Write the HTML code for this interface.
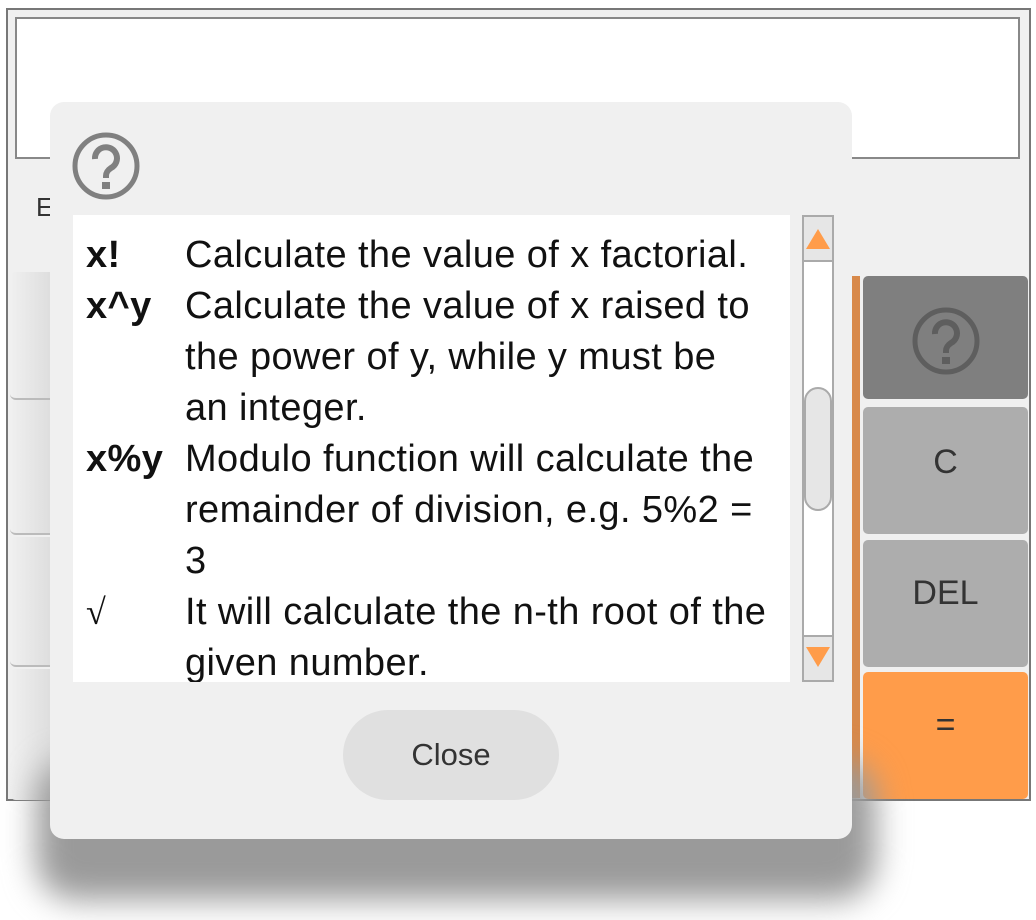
<!DOCTYPE html>
<html><head><meta charset="utf-8"><style>
*{margin:0;padding:0;box-sizing:border-box}
body{width:1036px;height:920px;background:#fff;position:relative;overflow:hidden;font-family:"Liberation Sans",Arial,sans-serif}
.abs{position:absolute}
.calc{left:6px;top:8px;width:1025px;height:793px;border:2px solid #777;background:#f0f0f0}
.disp{left:15px;top:17px;width:1005px;height:142px;border:2px solid #888;background:#fff}
.lb{left:10px;width:42px;background:linear-gradient(90deg,#f0f0f0,#ddd);border-radius:6px 0 0 6px;border-bottom:2px solid #bbb}
.rb{left:863px;width:165px;border-radius:5px;display:flex;align-items:center;justify-content:center;font-size:34px;color:#333}
.shadow{left:36px;top:760px;width:840px;height:140px;border-radius:40px;background:#9a9a9a;filter:blur(16px)}
.modal{left:50px;top:102px;width:802px;height:737px;background:#f0f0f0;border-radius:14px}
.content{left:73px;top:215px;width:717px;height:467px;background:#fff;overflow:hidden;font-size:38px;letter-spacing:0.4px;line-height:51px;color:#111}
.row{display:flex}
.k{width:112px;padding-left:13px;font-weight:bold;flex:none}
.v{white-space:nowrap}
.sb{left:802px;top:215px;width:32px;height:467px;border:2px solid #aaa;background:#fff}
.close{left:343px;top:710px;width:216px;height:90px;border-radius:45px;background:#e0e0e0;font-size:31px;color:#333;display:flex;align-items:center;justify-content:center}
</style></head><body>
<div class="abs calc"></div>
<div class="abs disp"></div>
<div class="abs" style="left:36px;top:192px;font-size:26px;color:#333">E</div>
<div class="abs lb" style="top:272px;height:128px"></div>
<div class="abs lb" style="top:400px;height:135px"></div>
<div class="abs lb" style="top:537px;height:130px"></div>
<div class="abs lb" style="top:669px;height:131px;border-bottom:none"></div>
<div class="abs" style="left:850px;top:276px;width:10px;height:522px;background:#d8894a"></div>
<div class="abs rb" style="top:276px;height:123px;background:#7f7f7f">
<svg width="70" height="70" viewBox="0 0 70 70" style="margin-top:6px"><circle cx="35" cy="35" r="31" fill="none" stroke="#5e5e5e" stroke-width="5"/><path d="M24 28a11 11 0 1 1 16 9c-3 2-5 4-5 8v2" fill="none" stroke="#5e5e5e" stroke-width="6"/><rect x="31" y="51" width="8" height="7" fill="#5e5e5e"/></svg></div>
<div class="abs rb" style="top:407px;height:127px;background:#adadad;align-items:flex-start;padding-top:36px">C</div>
<div class="abs rb" style="top:540px;height:127px;background:#adadad;align-items:flex-start;padding-top:34px">DEL</div>
<div class="abs rb" style="top:672px;height:127px;background:#ff9c4a;align-items:flex-start;padding-top:34px">=</div>
<div class="abs shadow"></div>
<div class="abs modal"></div>
<div class="abs" style="left:71px;top:131px"><svg width="70" height="70" viewBox="0 0 70 70"><circle cx="35" cy="35" r="31" fill="none" stroke="#808080" stroke-width="5"/><path d="M24 28a11 11 0 1 1 16 9c-3 2-5 4-5 8v2" fill="none" stroke="#808080" stroke-width="6"/><rect x="31" y="51" width="8" height="7" fill="#808080"/></svg></div>
<div class="abs content"><div style="padding-top:15px">
<div class="row"><div class="k">x!</div><div class="v">Calculate the value of x factorial.</div></div>
<div class="row"><div class="k">x^y</div><div class="v">Calculate the value of x raised to<br>the power of y, while y must be<br>an integer.</div></div>
<div class="row"><div class="k">x%y</div><div class="v">Modulo function will calculate the<br>remainder of division, e.g. 5%2 =<br>3</div></div>
<div class="row"><div class="k" style="font-weight:normal;font-family:'Liberation Serif',serif;font-size:36px">√</div><div class="v">It will calculate the n-th root of the<br>given number.</div></div>
</div></div>
<div class="abs sb">
<div class="abs" style="left:0;top:0;width:28px;height:45px;background:#e6e6e6;border-bottom:2px solid #aaa"></div>
<svg class="abs" style="left:2px;top:12px" width="24" height="20"><polygon points="12,0 24,20 0,20" fill="#ff9c4a"/></svg>
<div class="abs" style="left:0;top:170px;width:28px;height:124px;background:#e6e6e6;border:2px solid #aaa;border-radius:14px"></div>
<div class="abs" style="left:0;top:418px;width:28px;height:45px;background:#e6e6e6;border-top:2px solid #aaa"></div>
<svg class="abs" style="left:2px;top:430px" width="24" height="20"><polygon points="0,0 24,0 12,20" fill="#ff9c4a"/></svg>
</div>
<div class="abs close">Close</div>
</body></html>
